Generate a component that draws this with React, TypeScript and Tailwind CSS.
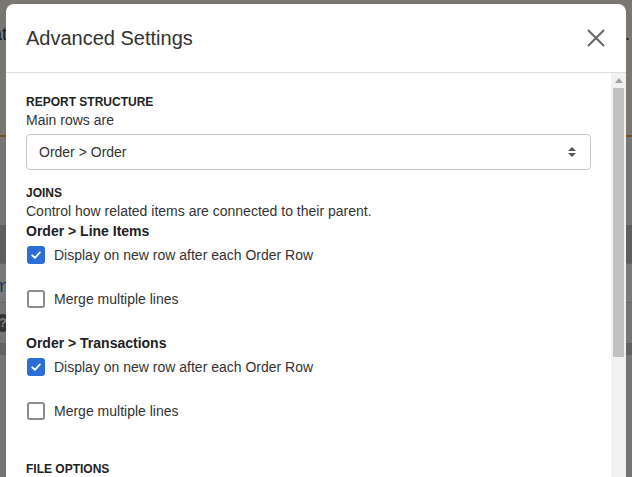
import React from "react";

const font = { fontFamily: '"Liberation Sans", Arial, sans-serif' };

function Checkbox({ checked }: { checked: boolean }) {
  if (checked) {
    return (
      <span className="flex h-[18px] w-[18px] shrink-0 items-center justify-center rounded-[3px] bg-[#2c6ed5]">
        <svg width="12" height="12" viewBox="0 0 12 12" fill="none">
          <path d="M2.2 6.3 L4.9 8.9 L9.9 3.4" stroke="#fff" strokeWidth="1.8" strokeLinecap="round" strokeLinejoin="round" />
        </svg>
      </span>
    );
  }
  return <span className="h-[18px] w-[18px] shrink-0 rounded-[3px] border-2 border-[#8c8c8c] bg-white" />;
}

function Option({ label, checked }: { label: string; checked: boolean }) {
  return (
    <label className="flex h-[28px] items-center gap-[9px] pl-px text-sm text-[#333]">
      <Checkbox checked={checked} />
      <span>{label}</span>
    </label>
  );
}

function JoinGroup({ title }: { title: string }) {
  return (
    <div>
      <div className="text-sm font-bold leading-5 text-[#222]">{title}</div>
      <div className="flex flex-col gap-4">
        <Option label="Display on new row after each Order Row" checked />
        <Option label="Merge multiple lines" checked={false} />
      </div>
    </div>
  );
}

export default function App() {
  return (
    <div className="relative h-[477px] w-[632px] overflow-hidden bg-[#ebebeb]" style={font}>
      {/* page behind the dialog */}
      <div className="flex h-[137px] items-start justify-between border-b-2 border-[#e3a64a] bg-[#f4ece0] pt-[20px] text-lg text-[#333]">
        <span className="-ml-[8px]">at</span>
        <span className="mr-[2px]">.</span>
      </div>
      <div className="h-[88px]" />
      <div className="h-[38px] bg-[#bcbcbc]" />
      <div className="h-[40px] border-y border-[#cfcfcf] bg-[#f2f2f2] pt-2 text-lg text-[#2a6fb5]">
        <span className="-ml-[6px]">m</span>
      </div>
      <div className="flex h-[40px] items-center">
        <span className="-ml-[6px] flex h-[18px] w-[18px] items-center justify-center rounded-full bg-[#666] text-xs font-bold text-white">?</span>
      </div>
      <div className="h-[12px] bg-[#c4c4c4]" />

      {/* overlay */}
      <div className="absolute inset-0 bg-black/50" />

      {/* dialog */}
      <div className="absolute left-[6px] top-[4px] flex h-[520px] w-[620px] flex-col overflow-hidden rounded-lg bg-white">
        <div className="flex h-[69px] shrink-0 items-center justify-between border-b border-[#dedede] pl-5 pr-[21px]">
          <h2 className="text-xl text-[#333]">Advanced Settings</h2>
          <svg width="18" height="18" viewBox="0 0 18 18" fill="none">
            <path d="M1 1 L17 17 M17 1 L1 17" stroke="#666" strokeWidth="2" />
          </svg>
        </div>

        <div className="flex min-h-0 flex-1">
          <div className="flex-1 px-5 pt-[21px]">
            <div className="text-xs font-bold uppercase leading-4 text-[#222]">Report Structure</div>
            <div className="text-sm leading-5 text-[#333]">Main rows are</div>
            <div className="mt-1 flex h-[36px] items-center justify-between rounded border border-[#c8c8c8] pl-3 pr-[13px] text-sm text-[#333]">
              <span>Order &gt; Order</span>
              <svg width="10" height="12" viewBox="0 0 10 12" fill="#555">
                <path d="M5 1 L9 5 L1 5 Z" />
                <path d="M1 7 L9 7 L5 11 Z" />
              </svg>
            </div>

            <div className="mt-[15px] text-xs font-bold uppercase leading-4 text-[#222]">Joins</div>
            <div className="text-sm leading-5 text-[#333]">Control how related items are connected to their parent.</div>
            <JoinGroup title="Order > Line Items" />
            <div className="mt-5">
              <JoinGroup title="Order > Transactions" />
            </div>

            <div className="mt-9 text-xs font-bold uppercase leading-4 text-[#222]">File Options</div>
          </div>

          {/* scrollbar */}
          <div className="flex w-[15px] shrink-0 flex-col items-center bg-[#f1f1f1]">
            <div className="flex h-[15px] items-center justify-center">
              <svg width="8" height="5" viewBox="0 0 8 5" fill="#a3a3a3">
                <path d="M4 0 L8 5 L0 5 Z" />
              </svg>
            </div>
            <div className="h-[269px] w-[11px] bg-[#c1c1c1]" />
          </div>
        </div>
      </div>
    </div>
  );
}
